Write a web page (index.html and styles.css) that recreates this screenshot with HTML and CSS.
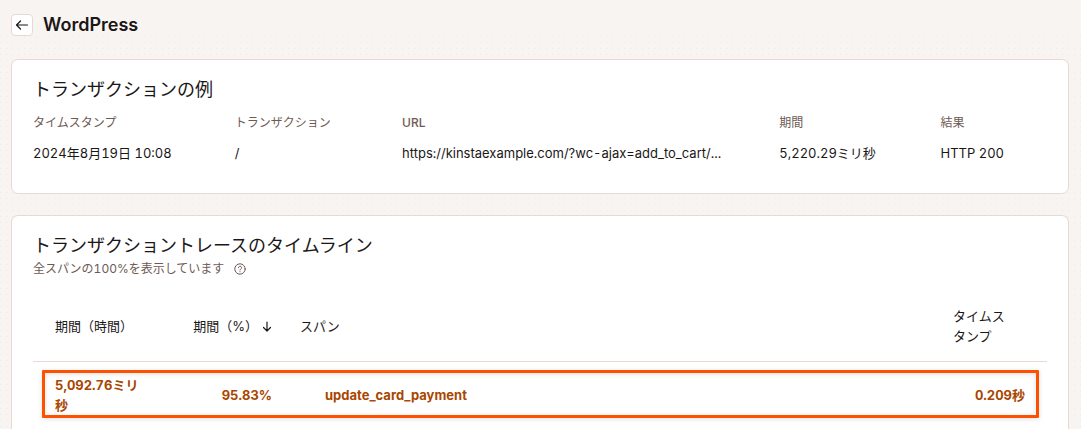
FILE: index.html
```html
<!DOCTYPE html>
<html lang="ja">
<head>
<meta charset="utf-8">
<meta name="viewport" content="width=device-width, initial-scale=1">
<title>WordPress</title>
<link rel="stylesheet" href="styles.css">
</head>
<body>
<header class="page-header">
  <button class="back" type="button" aria-label="戻る">
    <svg width="14" height="12" viewBox="0 0 14 12" fill="none" stroke="currentColor" stroke-width="1.2" stroke-linecap="round" stroke-linejoin="round" aria-hidden="true"><path d="M12.5 6H1.5M5.5 2L1.5 6l4 4"/></svg>
  </button>
  <h1 class="page-title">WordPress</h1>
</header>
<main class="content">
  <section class="card">
    <h2 class="card-title">トランザクションの例</h2>
    <table class="sample">
      <colgroup><col class="s-time"><col class="s-name"><col class="s-url"><col class="s-duration"><col></colgroup>
      <thead>
        <tr><th scope="col">タイムスタンプ</th><th scope="col">トランザクション</th><th scope="col" class="latin">URL</th><th scope="col">期間</th><th scope="col">結果</th></tr>
      </thead>
      <tbody>
        <tr><td>2024年8月19日 10:08</td><td>/</td><td>https://kinstaexample.com/?wc-ajax=add_to_cart/...</td><td>5,220.29ミリ秒</td><td>HTTP 200</td></tr>
      </tbody>
    </table>
  </section>
  <section class="card card-trace">
    <h2 class="card-title">トランザクショントレースのタイムライン</h2>
    <p class="note">全スパンの100%を表示しています
      <svg width="12" height="12" viewBox="0 0 12 12" fill="none" stroke="currentColor" stroke-width="1" stroke-linecap="round" aria-hidden="true"><circle cx="6" cy="6" r="5.2"/><path d="M4.4 4.7c0-2 3.2-2 3.2 0 0 1.2-1.6 1.1-1.6 2.3M6 8.7v.2"/></svg>
    </p>
    <div class="trace-wrap">
      <table class="trace">
        <colgroup><col class="t-time"><col class="t-percent"><col><col class="t-stamp"></colgroup>
        <thead>
          <tr>
            <th scope="col">期間（時間）</th>
            <th scope="col" class="percent" aria-sort="descending">期間（%）<svg class="sort" width="10" height="11" viewBox="0 0 10 11" fill="none" stroke="currentColor" stroke-width="1.2" stroke-linecap="round" stroke-linejoin="round" aria-hidden="true"><path d="M5 1v9M1.5 6.5L5 10l3.5-3.5"/></svg></th>
            <th scope="col">スパン</th>
            <th scope="col" class="stamp-head">タイムスタンプ</th>
          </tr>
        </thead>
        <tbody>
          <tr><td>5,092.76ミリ秒</td><td class="percent">95.83%</td><td class="span-name">update_card_payment</td><td class="stamp">0.209秒</td></tr>
        </tbody>
      </table>
      <div class="highlight"></div>
    </div>
  </section>
</main>
</body>
</html>
```
FILE: styles.css
```css
* { box-sizing: border-box; }

body {
  display: flex;
  flex-direction: column;
  min-height: 100vh;
  margin: 0;
  padding: 14px 12px 0 11px;
  background-color: #f8f4f2;
  color: #1b1717;
  font: 12px/20px Inter, "Noto Sans CJK JP", sans-serif;
  font-variant-numeric: tabular-nums;
}

h1, h2, p { margin: 0; }

.page-header {
  display: flex;
  align-items: center;
  gap: 10px;
  height: 22px;
}

.back {
  display: grid;
  place-items: center;
  width: 22px;
  height: 22px;
  padding: 0;
  border: 1px solid #e8dad2;
  border-radius: 4px;
  background: #fff;
  color: inherit;
}

.page-title {
  font-size: 18px;
  font-weight: 600;
  line-height: 22px;
}

.content {
  display: flex;
  flex: 1;
  flex-direction: column;
  gap: 21px;
  margin: 0 -12px 0 -11px;
  padding: 23px 12px 0 11px;
  background-image:
    linear-gradient(90deg, transparent 1px, #f8f4f2 1px),
    linear-gradient(#efe9e6 1px, transparent 1px);
  background-size: 6px 6px;
}

.card {
  padding: 17px 21px 25px;
  border: 1px solid #e8dad2;
  border-radius: 7px;
  background: #fff;
}

.card-trace {
  flex: 1;
  padding-bottom: 0;
  border-bottom: 0;
  border-radius: 7px 7px 0 0;
}

.card-title {
  font-size: 18px;
  font-weight: 400;
  line-height: 26px;
}

table {
  width: 100%;
  border-collapse: collapse;
  table-layout: fixed;
}

th, td {
  padding: 0;
  text-align: left;
}

td, .trace th { font-size: 13px; }

.sample th, .sample td {
  height: 30px;
  white-space: nowrap;
}

.sample { margin-top: 5px; }
.sample th { color: #6e5a54; font-weight: 400; }
.sample .latin { font-weight: 500; }
.s-time { width: 19.9%; }
.s-name { width: 16.5%; }
.s-url { width: 37.2%; }
.s-duration { width: 15.9%; }

.note {
  display: flex;
  align-items: center;
  gap: 10px;
  color: #6e5a54;
}

.trace-wrap {
  position: relative;
  margin-top: 13px;
}

.trace th {
  height: 69px;
  border-bottom: 1px solid #e8dad2;
  font-weight: 400;
}

.trace td {
  height: 68px;
  color: #a94600;
  font-weight: 700;
}

.trace th, .trace td { padding: 0 14px; }
.trace th:first-child, .trace td:first-child { padding: 0 22px; }
.trace .percent { text-align: right; white-space: nowrap; }
.trace .span-name { padding-left: 39px; }
.trace .stamp-head { padding: 0 40px 0 22px; }
.trace .stamp { padding-right: 22px; text-align: right; }
.t-time { width: 128px; }
.t-percent { width: 125px; }
.t-stamp { width: 116px; }

.sort { margin-left: 4px; vertical-align: -1px; }

.highlight {
  position: absolute;
  top: 78px;
  right: 8px;
  left: 9px;
  height: 48px;
  border: 3px solid #ff5000;
  border-radius: 1px;
  box-shadow: 0 1px 5px #0000001f, inset 0 1px 5px #0000001f;
  pointer-events: none;
}
```
